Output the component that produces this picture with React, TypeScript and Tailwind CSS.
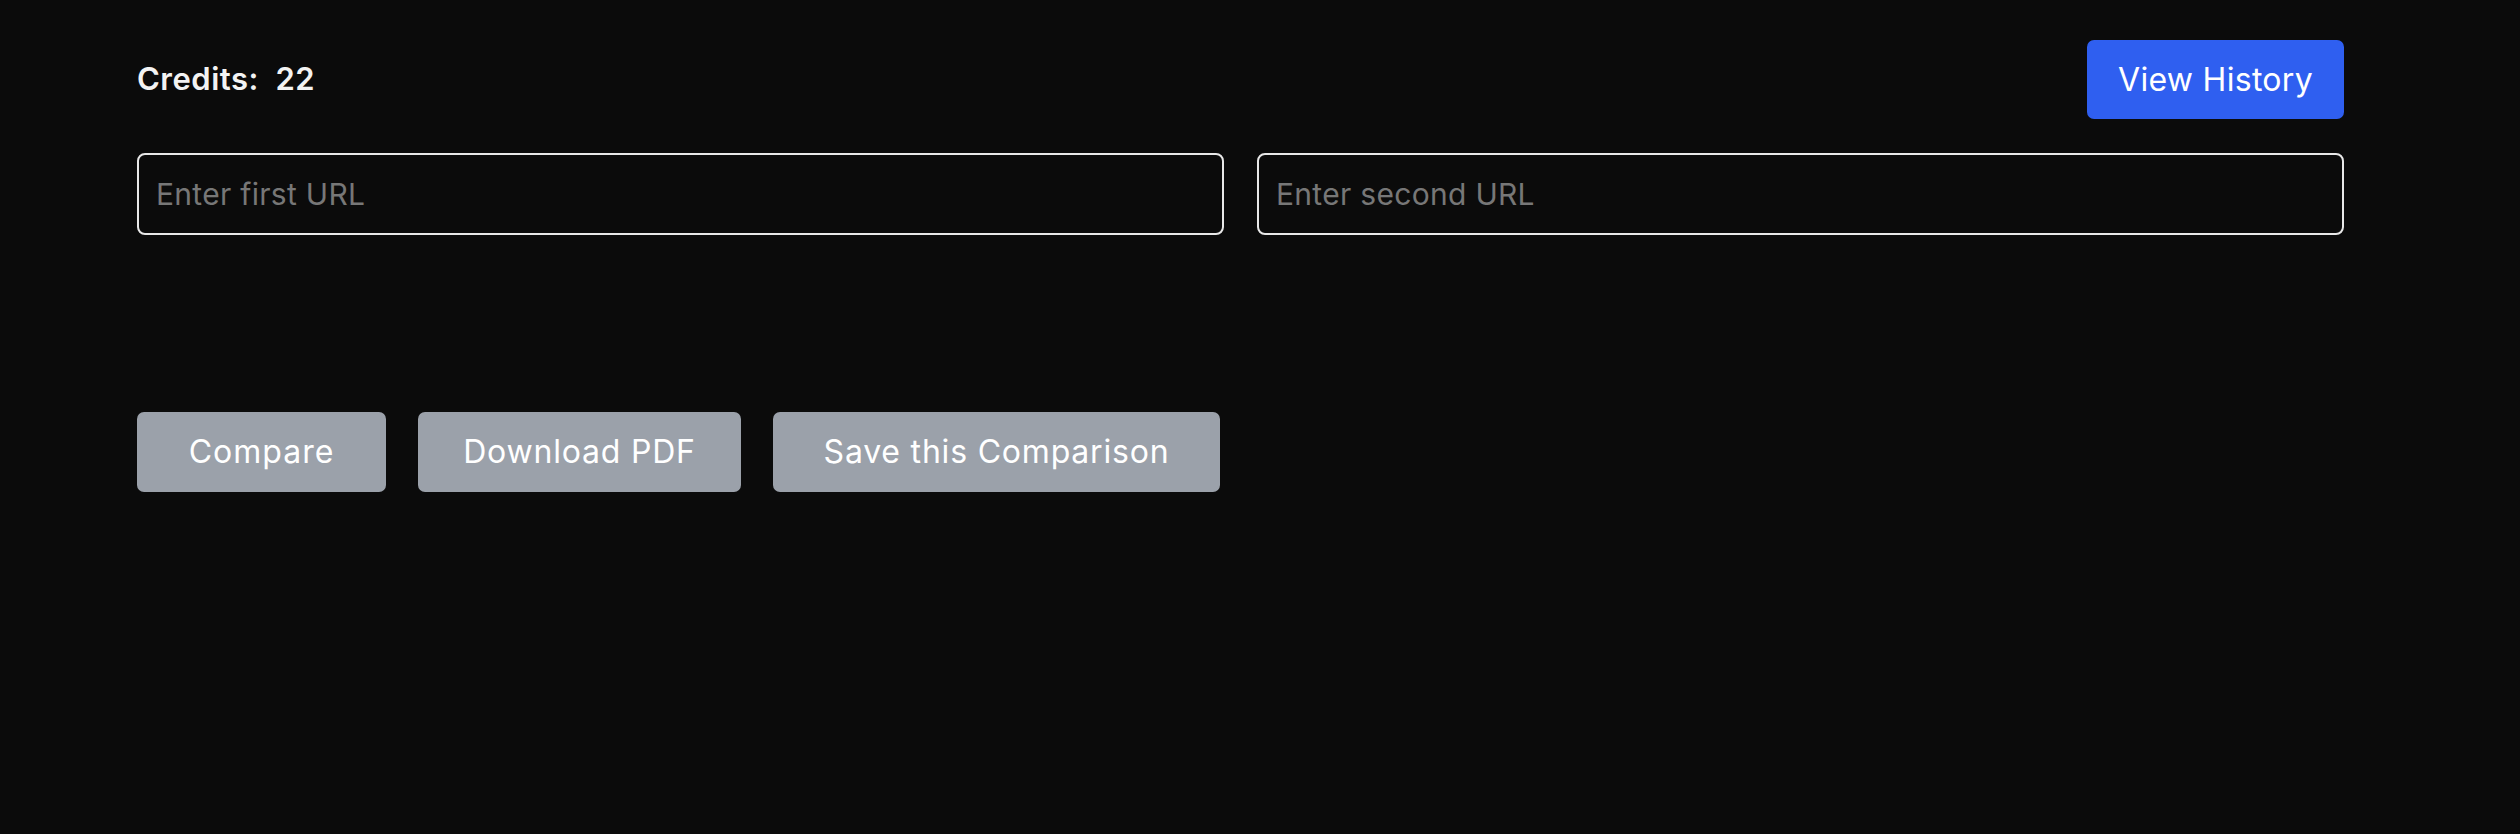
import React from "react";

export default function App() {
  const font = { fontFamily: "Inter, 'Noto Sans', sans-serif" };
  return (
    <div className="min-h-screen w-full bg-[#0b0b0b] text-white" style={font}>
      <div className="w-[2207px] ml-[137px] pt-[40px]">
        <div className="flex items-center justify-between h-[79px]">
          <div className="text-[31px] font-semibold text-[#f3f3f3] tracking-[0.5px]">
            Credits:&nbsp; 22
          </div>
          <button className="w-[257px] h-[79px] rounded-[7px] bg-[#2f5ff0] text-[32px] tracking-[0.3px] text-white font-normal flex items-center justify-center">
            View History
          </button>
        </div>
        <div className="mt-[34px] grid grid-cols-2 gap-[33px]">
          <input
            placeholder="Enter first URL"
            className="h-[82px] rounded-[8px] border-2 border-[#e8e8e8] bg-[#0b0b0b] pl-[17px] text-[30px] tracking-[0.3px] text-white placeholder:text-[#777777] outline-none"
          />
          <input
            placeholder="Enter second URL"
            className="h-[82px] rounded-[8px] border-2 border-[#e8e8e8] bg-[#0b0b0b] pl-[17px] text-[30px] tracking-[0.3px] text-white placeholder:text-[#777777] outline-none"
          />
        </div>
        <div className="mt-[177px] flex gap-[32px]">
          <button className="w-[249px] h-[80px] rounded-[7px] bg-[#9ba1aa] text-[32px] tracking-[1px] text-white flex items-center justify-center">
            Compare
          </button>
          <button className="w-[323px] h-[80px] rounded-[7px] bg-[#9ba1aa] text-[32px] tracking-[0.8px] text-white flex items-center justify-center">
            Download PDF
          </button>
          <button className="w-[447px] h-[80px] rounded-[7px] bg-[#9ba1aa] text-[32px] tracking-[0.8px] text-white flex items-center justify-center">
            Save this Comparison
          </button>
        </div>
      </div>
    </div>
  );
}
